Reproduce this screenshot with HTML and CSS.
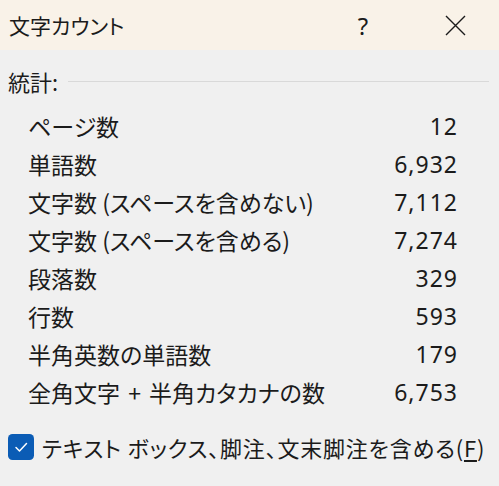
FILE: index.html
```html
<!DOCTYPE html>
<html lang="ja">
<head>
  <meta charset="UTF-8" />
  <title>文字カウント</title>
  <link rel="stylesheet" href="styles.css">
</head>
<body>
  <div class="dialog">
    <div class="title-bar">
      <span class="title">文字カウント</span>
      <button class="title-btn help-btn">?</button>
      <button class="title-btn close-btn">
        <svg width="21" height="21" viewBox="0 0 21 21"><path d="M1 1 L20 20 M20 1 L1 20" stroke="#1b1b1b" stroke-width="1.4" fill="none"/></svg>
      </button>
    </div>

    <div class="content">
      <div class="group-head">
        <span>統計:</span>
        <div class="group-line"></div>
      </div>

      <div class="stats">
        <div class="stat-row"><span>ページ数</span><span class="num">12</span></div>
        <div class="stat-row"><span>単語数</span><span class="num">6,932</span></div>
        <div class="stat-row"><span>文字数 (スペースを含めない)</span><span class="num">7,112</span></div>
        <div class="stat-row"><span>文字数 (スペースを含める)</span><span class="num">7,274</span></div>
        <div class="stat-row"><span>段落数</span><span class="num">329</span></div>
        <div class="stat-row"><span>行数</span><span class="num">593</span></div>
        <div class="stat-row"><span>半角英数の単語数</span><span class="num">179</span></div>
        <div class="stat-row"><span>全角文字 <span class="plus">+</span> 半角カタカナの数</span><span class="num">6,753</span></div>
      </div>

      <label class="check-row">
        <svg class="check-box" width="26" height="26" viewBox="0 0 26 26">
          <rect x="0" y="0" width="26" height="26" rx="4.5" fill="#0b5cb5"/>
          <path d="M8 13.5 L11.5 17 L18.5 9.5" stroke="#fff" stroke-width="1.5" fill="none" stroke-linecap="round" stroke-linejoin="round"/>
        </svg>
        <span class="check-label">テキスト ボックス、脚注、文末脚注を含める(<u>F</u>)</span>
      </label>
    </div>
  </div>
</body>
</html>
```

FILE: styles.css
```css
body {
  margin: 0;
  background: #f0f0f0;
  color: #1b1b1b;
  font-family: "Noto Sans CJK JP", "Noto Sans", sans-serif;
  font-feature-settings: "palt";
}

.dialog {
  width: 499px;
  height: 486px;
  overflow: hidden;
}

.title-bar {
  height: 50px;
  background: #f9f2e8;
  display: flex;
  align-items: center;
  padding: 0 21px 0 9px;
}

.title {
  font-size: 21px;
  line-height: 1;
  flex: 1;
}

.title-btn {
  background: none;
  border: none;
  padding: 0;
  width: 46px;
  height: 50px;
  display: flex;
  align-items: center;
  justify-content: center;
  color: #1b1b1b;
  font-family: "Noto Sans", sans-serif;
  font-size: 24px;
}

.close-btn {
  margin-left: 46px;
}

.content {
  padding: 19px 10px 0 8px;
}

.group-head {
  display: flex;
  align-items: center;
  gap: 10px;
  font-size: 22px;
  line-height: 24px;
}

.group-line {
  flex: 1;
  height: 1px;
  background: #d9d9d9;
}

.stats {
  margin-top: 14px;
  padding: 0 32px 0 20px;
}

.stat-row {
  display: flex;
  justify-content: space-between;
  align-items: center;
  height: 38px;
  font-size: 23px;
}

.plus {
  margin: 0 3px;
}

.num {
  font-family: "Noto Sans", sans-serif;
  letter-spacing: 1px;
  margin-right: -1px;
}

.check-row {
  display: flex;
  align-items: center;
  gap: 8px;
  margin-top: 20px;
  font-size: 22px;
}

.check-box {
  flex: none;
}

.check-label {
  letter-spacing: 0.8px;
}

.check-row u {
  text-underline-offset: 3px;
}
```
